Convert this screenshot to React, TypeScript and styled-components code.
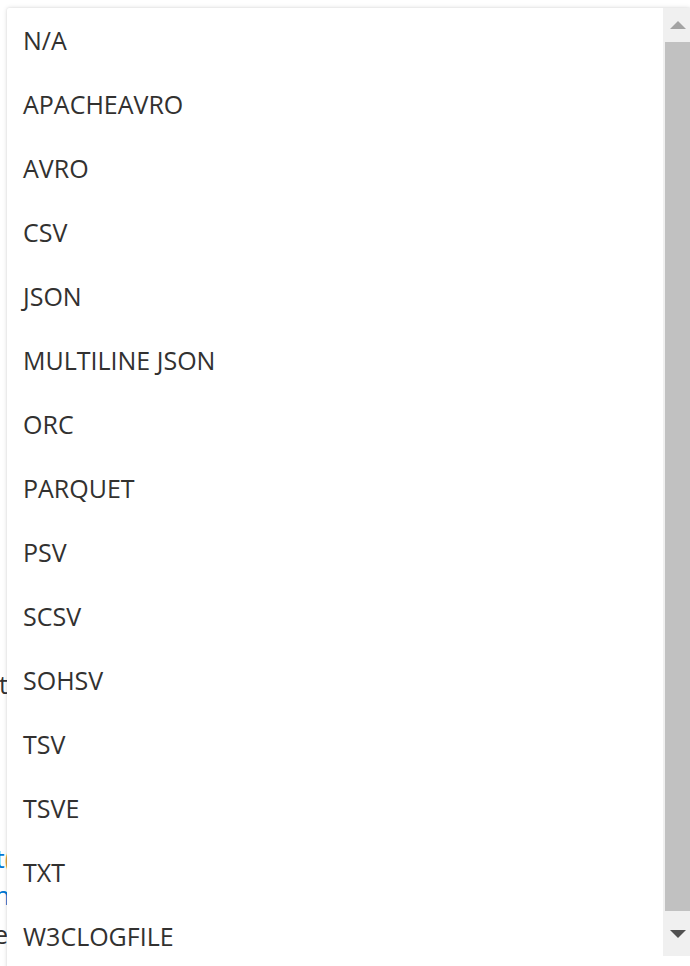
import React from 'react';
import styled, { createGlobalStyle } from 'styled-components';

const GlobalStyle = createGlobalStyle`
    html, body {
        margin: 0;
        padding: 0;
        background: #ffffff;
        overflow: hidden;
    }
    body {
        font-family: "Open Sans", "Noto Sans", sans-serif;
    }
`;

const Page = styled.div`
    position: relative;
    width: 690px;
    height: 966px;
    overflow: hidden;
    background: #ffffff;
`;

const Backdrop = styled.div`
    position: relative;
    width: 8px;
    height: 966px;
`;

const PeekLine = styled.div<{ $top: number; $color: string; $right?: number }>`
    position: absolute;
    top: ${p => p.$top}px;
    right: ${p => p.$right ?? 0}px;
    font-size: 25px;
    line-height: 30px;
    white-space: nowrap;
    color: ${p => p.$color};
`;

const Accent = styled.span`
    color: #d8a04a;
`;

const Callout = styled.div`
    position: absolute;
    left: 7px;
    top: 8px;
    right: 0;
    height: 980px;
    display: flex;
    background: #ffffff;
    border-radius: 2px 0 0 0;
    box-shadow: 0 0 5px rgba(0, 0, 0, 0.13), 0 0 2px rgba(0, 0, 0, 0.1);
`;

const List = styled.div`
    flex: 1;
    display: flex;
    flex-direction: column;
    overflow: hidden;
`;

const Option = styled.div`
    height: 64px;
    flex-shrink: 0;
    display: flex;
    align-items: center;
    padding-left: 16px;
    box-sizing: border-box;
    font-size: 25px;
    color: #323130;
`;

const Scrollbar = styled.div`
    width: 27px;
    height: 948px;
    display: flex;
    flex-direction: column;
    background: #f0f0f0;
`;

const ArrowButton = styled.div<{ $h: number }>`
    height: ${p => p.$h}px;
    display: flex;
    align-items: center;
    justify-content: center;
    padding-left: 2px;
`;

const Thumb = styled.div`
    flex: 1;
    margin-left: 2px;
    background: #c1c1c1;
`;

const options = [
    'N/A',
    'APACHEAVRO',
    'AVRO',
    'CSV',
    'JSON',
    'MULTILINE JSON',
    'ORC',
    'PARQUET',
    'PSV',
    'SCSV',
    'SOHSV',
    'TSV',
    'TSVE',
    'TXT',
    'W3CLOGFILE',
];

const App: React.FC = () => {
    return (
        <Page>
            <GlobalStyle />
            <Backdrop>
                <PeekLine $top={669} $color="#323130">format</PeekLine>
                <PeekLine $top={843} $color="#0078d4" $right={-4}>
                    Get<Accent>(</Accent>
                </PeekLine>
                <PeekLine $top={880} $color="#0078d4" $right={-2}>learn</PeekLine>
                <PeekLine $top={919} $color="#323130">the</PeekLine>
            </Backdrop>
            <Callout>
                <List>
                    {options.map(o => (
                        <Option key={o}>{o}</Option>
                    ))}
                </List>
                <Scrollbar>
                    <ArrowButton $h={34}>
                        <svg width="16" height="8" viewBox="0 0 16 8">
                            <path d="M0 8 L8 0 L16 8 Z" fill="#a3a3a3" />
                        </svg>
                    </ArrowButton>
                    <Thumb />
                    <ArrowButton $h={45}>
                        <svg width="16" height="8" viewBox="0 0 16 8">
                            <path d="M0 0 L16 0 L8 8 Z" fill="#505050" />
                        </svg>
                    </ArrowButton>
                </Scrollbar>
            </Callout>
        </Page>
    );
};

export default App;
